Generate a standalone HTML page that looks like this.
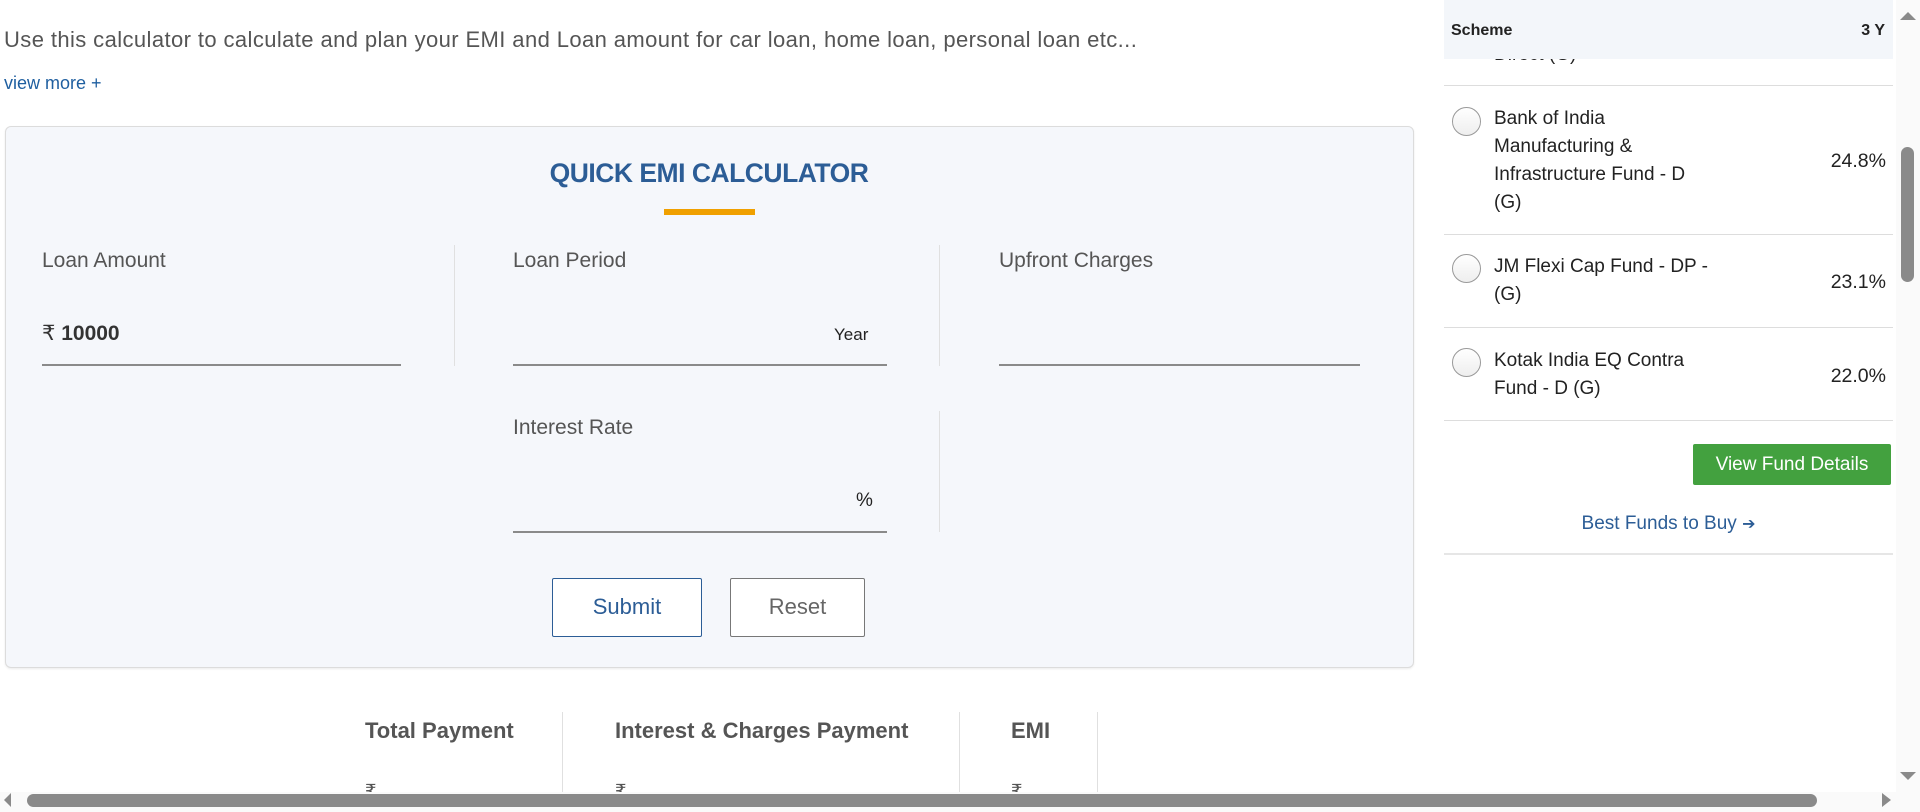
<!DOCTYPE html>
<html><head><meta charset="utf-8"><style>
*{margin:0;padding:0;box-sizing:border-box}
body{width:1920px;height:812px;overflow:hidden;background:#fff;font-family:"Liberation Sans",sans-serif;position:relative}
.a{position:absolute;white-space:nowrap}
.lbl{font-size:21px;color:#555}
.ln{position:absolute;height:2px;background:#8a8a8a}
.vd{position:absolute;width:1px;background:#e0e0e0}
.hl{position:absolute;left:1444px;width:449px;height:1px;background:#ddd}
.rad{position:absolute;left:1452px;width:29px;height:29px;border-radius:50%;border:1.5px solid #999;background:linear-gradient(#fff,#eee)}
.fn{position:absolute;left:1494px;font-size:19px;line-height:28px;color:#222}
.pc{position:absolute;right:34px;font-size:19.5px;color:#222}
.rh{position:absolute;font-size:22px;font-weight:bold;color:#555}
</style></head><body>
<div class="a" style="left:4px;top:27px;font-size:22px;color:#555;letter-spacing:0.4px">Use this calculator to calculate and plan your EMI and Loan amount for car loan, home loan, personal loan etc...</div>
<div class="a" style="left:4px;top:73px;font-size:18px;color:#1f5fa0">view more +</div>

<div style="position:absolute;left:5px;top:126px;width:1409px;height:542px;background:#f5f7fb;border:1px solid #dcdcdc;border-radius:6px;box-shadow:0 1px 2px rgba(0,0,0,.08)"></div>
<div class="a" style="left:0;width:1418px;text-align:center;top:158px;font-size:26.5px;font-weight:bold;color:#2c5d96;letter-spacing:-0.5px">QUICK EMI CALCULATOR</div>
<div style="position:absolute;left:664px;top:209px;width:91px;height:6px;background:#f0a000"></div>

<div class="a lbl" style="left:42px;top:249px">Loan Amount</div>
<div class="a lbl" style="left:513px;top:249px">Loan Period</div>
<div class="a lbl" style="left:999px;top:249px">Upfront Charges</div>
<div class="vd" style="left:454px;top:245px;height:121px"></div>
<div class="vd" style="left:939px;top:245px;height:121px"></div>
<div class="a" style="left:42px;top:321px;font-size:21px;color:#333"><span style="font-weight:normal">₹</span> <b>10000</b></div>
<div class="a" style="left:834px;top:325px;font-size:17px;color:#222">Year</div>
<div class="ln" style="left:42px;top:364px;width:359px"></div>
<div class="ln" style="left:513px;top:364px;width:374px"></div>
<div class="ln" style="left:999px;top:364px;width:361px"></div>

<div class="a lbl" style="left:513px;top:416px">Interest Rate</div>
<div class="vd" style="left:939px;top:411px;height:121px"></div>
<div class="a" style="left:856px;top:490px;font-size:19px;color:#222">%</div>
<div class="ln" style="left:513px;top:531px;width:374px"></div>

<div class="a" style="left:552px;top:578px;width:150px;height:59px;border:1.5px solid #2c5d96;border-radius:2px;background:#fff;color:#2c5d96;font-size:22px;text-align:center;line-height:56px">Submit</div>
<div class="a" style="left:730px;top:578px;width:135px;height:59px;border:1.5px solid #777;border-radius:2px;background:#fff;color:#666;font-size:22px;text-align:center;line-height:56px">Reset</div>

<div class="rh" style="left:365px;top:718px">Total Payment</div>
<div class="rh" style="left:615px;top:718px">Interest &amp; Charges Payment</div>
<div class="rh" style="left:1011px;top:718px">EMI</div>
<div class="vd" style="left:562px;top:712px;height:80px"></div>
<div class="vd" style="left:959px;top:712px;height:80px"></div>
<div class="vd" style="left:1097px;top:712px;height:80px"></div>
<div class="a" style="left:365px;top:781px;font-size:18px;color:#555">₹</div>
<div class="a" style="left:615px;top:781px;font-size:18px;color:#555">₹</div>
<div class="a" style="left:1011px;top:781px;font-size:18px;color:#555">₹</div>

<!-- right panel -->
<div class="a" style="left:1494px;top:44px;font-size:19px;color:#222">Direct (G)</div>
<div style="position:absolute;left:1444px;top:0;width:449px;height:59px;background:#f3f6fa"></div>
<div class="a" style="left:1451px;top:22px;font-size:16px;font-weight:bold;color:#222">Scheme</div>
<div class="a" style="right:35px;top:22px;font-size:16px;font-weight:bold;color:#222">3 Y</div>
<div class="hl" style="top:85px"></div>
<div class="rad" style="top:107px"></div>
<div class="fn" style="top:105px">Bank of India<br>Manufacturing &amp;<br>Infrastructure Fund - D<br>(G)</div>
<div class="pc" style="top:150px">24.8%</div>
<div class="hl" style="top:234px"></div>
<div class="rad" style="top:254px"></div>
<div class="fn" style="top:253px">JM Flexi Cap Fund - DP -<br>(G)</div>
<div class="pc" style="top:271px">23.1%</div>
<div class="hl" style="top:327px"></div>
<div class="rad" style="top:348px"></div>
<div class="fn" style="top:347px">Kotak India EQ Contra<br>Fund - D (G)</div>
<div class="pc" style="top:365px">22.0%</div>
<div class="hl" style="top:420px"></div>
<div class="a" style="left:1693px;top:444px;width:198px;height:41px;background:#43a13f;border-radius:2px;color:#fff;font-size:19px;text-align:center;line-height:41px">View Fund Details</div>
<div class="a" style="left:1444px;width:449px;text-align:center;top:513px;font-size:19px;color:#2c5d96">Best Funds to Buy <span style="font-size:16px">➔</span></div>
<div class="hl" style="top:553px;background:#e6e6e6;height:2px"></div>

<!-- vertical scrollbar -->
<div style="position:absolute;left:1896px;top:0;width:24px;height:792px;background:#fafafa"></div>
<div style="position:absolute;left:1901px;top:147px;width:13px;height:135px;background:#8a8a8a;border-radius:7px"></div>
<div class="a" style="left:1900px;top:12px;width:0;height:0;border-left:8px solid transparent;border-right:8px solid transparent;border-bottom:8px solid #8a8a8a"></div>
<div class="a" style="left:1900px;top:772px;width:0;height:0;border-left:8px solid transparent;border-right:8px solid transparent;border-top:8px solid #8a8a8a"></div>
<!-- horizontal scrollbar -->
<div style="position:absolute;left:0;top:792px;width:1920px;height:20px;background:#fafafa"></div>
<div style="position:absolute;left:27px;top:794px;width:1790px;height:13px;background:#8a8a8a;border-radius:7px"></div>
<div class="a" style="left:4px;top:793px;width:0;height:0;border-top:7px solid transparent;border-bottom:7px solid transparent;border-right:7px solid #8a8a8a"></div>
<div class="a" style="left:1882px;top:793px;width:0;height:0;border-top:7px solid transparent;border-bottom:7px solid transparent;border-left:9px solid #8a8a8a"></div>
</body></html>
